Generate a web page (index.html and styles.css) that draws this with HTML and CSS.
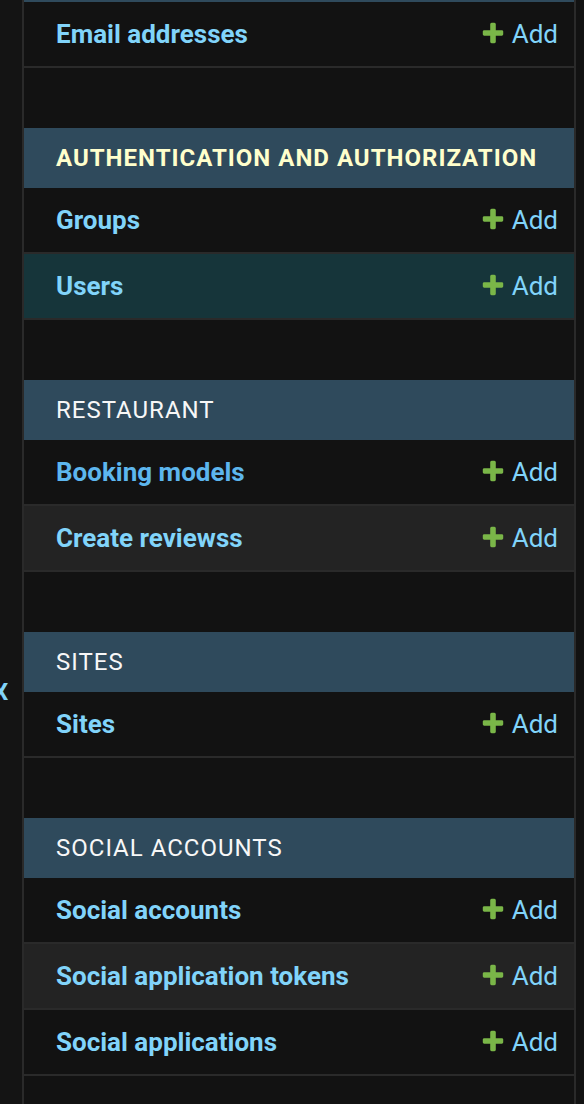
FILE: index.html
```html
<!DOCTYPE html>
<html lang="en">
<head>
<meta charset="utf-8">
<title>Site administration</title>
<link rel="stylesheet" href="styles.css">
</head>
<body>
<div class="page">
  <button class="toggle" type="button" aria-label="Toggle navigation"><span class="toggle-glyph">X</span></button>
  <nav class="sidebar">
    <div class="scroller">
      <table class="module">
        <caption><a class="section" href="#">Accounts</a></caption>
        <tr>
          <th scope="row"><a href="#">Email addresses</a></th>
          <td><a class="addlink" href="#"><svg class="plus" viewBox="0 0 1792 1792" width="26" height="26" aria-hidden="true"><path fill="#7ab648" d="M1600 796v192q0 40-28 68t-68 28h-416v416q0 40-28 68t-68 28h-192q-40 0-68-28t-28-68v-416h-416q-40 0-68-28t-28-68v-192q0-40 28-68t68-28h416v-416q0-40 28-68t68-28h192q40 0 68 28t28 68v416h416q40 0 68 28t28 68z"/></svg>Add</a></td>
        </tr>
      </table>

      <table class="module current-app">
        <caption><a class="section" href="#">Authentication and Authorization</a></caption>
        <tr>
          <th scope="row"><a href="#">Groups</a></th>
          <td><a class="addlink" href="#"><svg class="plus" viewBox="0 0 1792 1792" width="26" height="26" aria-hidden="true"><path fill="#7ab648" d="M1600 796v192q0 40-28 68t-68 28h-416v416q0 40-28 68t-68 28h-192q-40 0-68-28t-28-68v-416h-416q-40 0-68-28t-28-68v-192q0-40 28-68t68-28h416v-416q0-40 28-68t68-28h192q40 0 68 28t28 68v416h416q40 0 68 28t28 68z"/></svg>Add</a></td>
        </tr>
        <tr class="current-model">
          <th scope="row"><a href="#">Users</a></th>
          <td><a class="addlink" href="#"><svg class="plus" viewBox="0 0 1792 1792" width="26" height="26" aria-hidden="true"><path fill="#7ab648" d="M1600 796v192q0 40-28 68t-68 28h-416v416q0 40-28 68t-68 28h-192q-40 0-68-28t-28-68v-416h-416q-40 0-68-28t-28-68v-192q0-40 28-68t68-28h416v-416q0-40 28-68t68-28h192q40 0 68 28t28 68v416h416q40 0 68 28t28 68z"/></svg>Add</a></td>
        </tr>
      </table>

      <table class="module">
        <caption><a class="section" href="#">Restaurant</a></caption>
        <tr>
          <th scope="row"><a class="hover" href="#">Booking models</a></th>
          <td><a class="addlink" href="#"><svg class="plus" viewBox="0 0 1792 1792" width="26" height="26" aria-hidden="true"><path fill="#7ab648" d="M1600 796v192q0 40-28 68t-68 28h-416v416q0 40-28 68t-68 28h-192q-40 0-68-28t-28-68v-416h-416q-40 0-68-28t-28-68v-192q0-40 28-68t68-28h416v-416q0-40 28-68t68-28h192q40 0 68 28t28 68v416h416q40 0 68 28t28 68z"/></svg>Add</a></td>
        </tr>
        <tr>
          <th scope="row"><a href="#">Create reviewss</a></th>
          <td><a class="addlink" href="#"><svg class="plus" viewBox="0 0 1792 1792" width="26" height="26" aria-hidden="true"><path fill="#7ab648" d="M1600 796v192q0 40-28 68t-68 28h-416v416q0 40-28 68t-68 28h-192q-40 0-68-28t-28-68v-416h-416q-40 0-68-28t-28-68v-192q0-40 28-68t68-28h416v-416q0-40 28-68t68-28h192q40 0 68 28t28 68v416h416q40 0 68 28t28 68z"/></svg>Add</a></td>
        </tr>
      </table>

      <table class="module">
        <caption><a class="section" href="#">Sites</a></caption>
        <tr>
          <th scope="row"><a href="#">Sites</a></th>
          <td><a class="addlink" href="#"><svg class="plus" viewBox="0 0 1792 1792" width="26" height="26" aria-hidden="true"><path fill="#7ab648" d="M1600 796v192q0 40-28 68t-68 28h-416v416q0 40-28 68t-68 28h-192q-40 0-68-28t-28-68v-416h-416q-40 0-68-28t-28-68v-192q0-40 28-68t68-28h416v-416q0-40 28-68t68-28h192q40 0 68 28t28 68v416h416q40 0 68 28t28 68z"/></svg>Add</a></td>
        </tr>
      </table>

      <table class="module">
        <caption><a class="section" href="#">Social Accounts</a></caption>
        <tr>
          <th scope="row"><a href="#">Social accounts</a></th>
          <td><a class="addlink" href="#"><svg class="plus" viewBox="0 0 1792 1792" width="26" height="26" aria-hidden="true"><path fill="#7ab648" d="M1600 796v192q0 40-28 68t-68 28h-416v416q0 40-28 68t-68 28h-192q-40 0-68-28t-28-68v-416h-416q-40 0-68-28t-28-68v-192q0-40 28-68t68-28h416v-416q0-40 28-68t68-28h192q40 0 68 28t28 68v416h416q40 0 68 28t28 68z"/></svg>Add</a></td>
        </tr>
        <tr>
          <th scope="row"><a href="#">Social application tokens</a></th>
          <td><a class="addlink" href="#"><svg class="plus" viewBox="0 0 1792 1792" width="26" height="26" aria-hidden="true"><path fill="#7ab648" d="M1600 796v192q0 40-28 68t-68 28h-416v416q0 40-28 68t-68 28h-192q-40 0-68-28t-28-68v-416h-416q-40 0-68-28t-28-68v-192q0-40 28-68t68-28h416v-416q0-40 28-68t68-28h192q40 0 68 28t28 68v416h416q40 0 68 28t28 68z"/></svg>Add</a></td>
        </tr>
        <tr>
          <th scope="row"><a href="#">Social applications</a></th>
          <td><a class="addlink" href="#"><svg class="plus" viewBox="0 0 1792 1792" width="26" height="26" aria-hidden="true"><path fill="#7ab648" d="M1600 796v192q0 40-28 68t-68 28h-416v416q0 40-28 68t-68 28h-192q-40 0-68-28t-28-68v-416h-416q-40 0-68-28t-28-68v-192q0-40 28-68t68-28h416v-416q0-40 28-68t68-28h192q40 0 68 28t28 68v416h416q40 0 68 28t28 68z"/></svg>Add</a></td>
        </tr>
      </table>
    </div>
  </nav>
</div>
</body>
</html>
```

FILE: styles.css
```css
html, body {
  margin: 0;
  padding: 0;
  background: #121212;
  height: 100%;
}

body {
  font-family: Roboto, "Liberation Sans", sans-serif;
  color: #eeeeee;
  overflow: hidden;
}

.page {
  display: flex;
  align-items: stretch;
  height: 1104px;
}

.toggle {
  flex: 0 0 22px;
  width: 22px;
  margin: 0;
  padding: 0;
  border: 0;
  border-right: 2px solid #2a2a2a;
  background: #141414;
  overflow: hidden;
  display: flex;
  align-items: flex-start;
  justify-content: flex-start;
  padding-top: 678px;
  box-sizing: content-box;
  cursor: pointer;
}

.toggle-glyph {
  font-family: Roboto, "Liberation Sans", sans-serif;
  font-size: 24px;
  font-weight: 700;
  line-height: 28px;
  color: #81d4fa;
  margin-left: -7px;
}

.sidebar {
  flex: 0 0 550px;
  width: 550px;
  border-right: 2px solid #2a2a2a;
  overflow: hidden;
}

.scroller {
  margin-top: -58px;
}

.module {
  width: 100%;
  border-collapse: collapse;
  border-spacing: 0;
  margin-bottom: 60px;
}

.module caption {
  background: #2f4a5c;
  text-align: left;
  padding: 16px 32px;
  font-size: 24px;
  line-height: 28px;
  letter-spacing: 1px;
  text-transform: uppercase;
  font-weight: 400;
}

.section {
  color: #f7f7f7;
  text-decoration: none;
}

.current-app .section {
  color: #ffffcc;
  font-weight: 700;
}

.module tr {
  background: #121212;
}

.module tr:nth-child(even) {
  background: #232323;
}

.module tr.current-model {
  background: #16353a;
}

.module th,
.module td {
  border-bottom: 2px solid #2a2a2a;
  font-size: 26px;
  line-height: 32px;
  height: 32px;
  vertical-align: top;
}

.module th {
  text-align: left;
  padding: 16px 0 16px 32px;
  font-weight: 700;
}

.module td {
  text-align: right;
  padding: 16px 16px 16px 0;
  font-weight: 400;
  white-space: nowrap;
}

.module a {
  color: #81d4fa;
  text-decoration: none;
}

.module a.hover {
  color: #5db6ee;
}

.module caption a.section {
  color: #f7f7f7;
}

.module.current-app caption a.section {
  color: #ffffcc;
}

.addlink .plus {
  display: inline-block;
  vertical-align: top;
  margin-top: 2px;
  margin-right: 6px;
}
```
